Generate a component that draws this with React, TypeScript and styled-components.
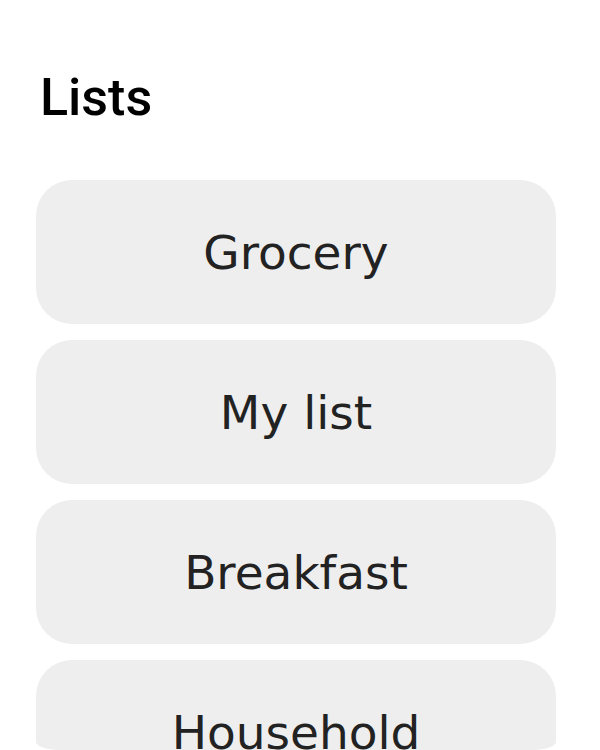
import React from "react";
import styled, { createGlobalStyle } from "styled-components";

const GlobalStyle = createGlobalStyle`
  html, body {
    margin: 0;
    padding: 0;
    background: #ffffff;
  }
  body {
    font-family: "DejaVu Sans", "Noto Sans", sans-serif;
  }
`;

const Page = styled.div`
  width: 600px;
  height: 750px;
  overflow: hidden;
  display: flex;
  flex-direction: column;
  padding: 68px 44px 0 36px;
  box-sizing: border-box;
`;

const Title = styled.h1`
  margin: 0 0 0 4px;
  font-family: Roboto, "Liberation Sans", sans-serif;
  font-weight: 500;
  font-size: 52px;
  line-height: 60px;
  color: #000000;
`;

const ListArea = styled.div`
  margin-top: 52px;
  flex: 1;
  min-height: 0;
  overflow: hidden;
  display: flex;
  flex-direction: column;
  gap: 16px;
  border-bottom-left-radius: 26px 8px;
  border-bottom-right-radius: 26px 8px;
`;

const ListCard = styled.button`
  flex: 0 0 auto;
  height: 144px;
  width: 100%;
  border: none;
  border-radius: 36px;
  background: #eeeeee;
  display: flex;
  align-items: center;
  justify-content: center;
  font-family: "DejaVu Sans", "Noto Sans", sans-serif;
  font-weight: 400;
  font-size: 47px;
  color: #222222;
  padding: 0;
  cursor: pointer;
`;

const lists = ["Grocery", "My list", "Breakfast", "Household"];

export default function App() {
  return (
    <>
      <GlobalStyle />
      <Page>
        <Title>Lists</Title>
        <ListArea>
          {lists.map((name) => (
            <ListCard key={name}>{name}</ListCard>
          ))}
        </ListArea>
      </Page>
    </>
  );
}
